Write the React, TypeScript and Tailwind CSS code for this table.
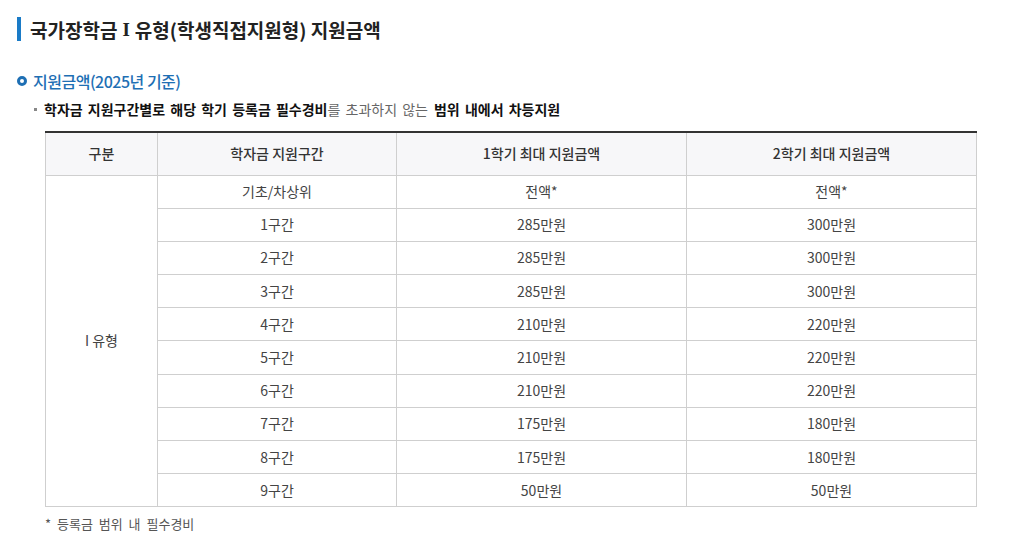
const rows: [string, string, string][] = [
  ["기초/차상위", "전액*", "전액*"],
  ["1구간", "285만원", "300만원"],
  ["2구간", "285만원", "300만원"],
  ["3구간", "285만원", "300만원"],
  ["4구간", "210만원", "220만원"],
  ["5구간", "210만원", "220만원"],
  ["6구간", "210만원", "220만원"],
  ["7구간", "175만원", "180만원"],
  ["8구간", "175만원", "180만원"],
  ["9구간", "50만원", "50만원"],
];

export default function App() {
  return (
    <div className="min-h-[560px] bg-white px-[17px] pt-[17px] font-['Noto_Sans_CJK_KR','Noto_Sans',sans-serif] text-[#333]">
      <h1 className="flex h-[24px] items-center border-l-4 border-[#1a7bc7] pl-[9px] text-[19px] font-bold leading-none text-[#222]">
        국가장학금 <span className="mx-[5px] font-['Liberation_Serif',serif]">I</span> 유형(학생직접지원형) 지원금액
      </h1>

      <h2 className="mt-[32px] flex items-center gap-[6px] text-[16px] font-medium leading-none tracking-[-0.5px] text-[#1e6fb4]">
        <span className="inline-block h-[10px] w-[10px] rounded-full border-[3px] border-[#1e6fb4]" />
        지원금액(2025년 기준)
      </h2>

      <p className="mt-[13px] flex items-center pl-[17px] text-[14px] leading-none text-[#666] [word-spacing:2px]">
        <span className="mr-[7px] inline-block h-[3px] w-[3px] bg-[#888]" />
        <b className="font-bold text-[#111]">학자금 지원구간별로 해당 학기 등록금 필수경비</b>
        <span>를 초과하지 않는</span>
        <b className="ml-[6px] font-bold text-[#111]">범위 내에서 차등지원</b>
      </p>

      <table className="ml-[28px] mt-[15px] w-[931px] table-fixed border-collapse border-t-2 border-t-[#333] text-center text-[14px] text-[#444]">
        <colgroup>
          <col className="w-[112px]" />
          <col className="w-[239px]" />
          <col className="w-[290px]" />
          <col className="w-[290px]" />
        </colgroup>
        <thead>
          <tr className="h-[43px] bg-[#f7f7f9]">
            <th className="border border-t-0 border-[#cfcfcf] font-medium text-[#333]">구분</th>
            <th className="border border-t-0 border-[#cfcfcf] font-medium text-[#333]">학자금 지원구간</th>
            <th className="border border-t-0 border-[#cfcfcf] font-medium text-[#333]">1학기 최대 지원금액</th>
            <th className="border border-t-0 border-[#cfcfcf] font-medium text-[#333]">2학기 최대 지원금액</th>
          </tr>
        </thead>
        <tbody>
          {rows.map((r, i) => (
            <tr key={r[0]} className="h-[33.2px]">
              {i === 0 && (
                <td rowSpan={rows.length} className="border border-[#cfcfcf]">
                  I 유형
                </td>
              )}
              <td className="border border-[#cfcfcf]">{r[0]}</td>
              <td className="border border-[#cfcfcf]">{r[1]}</td>
              <td className="border border-[#cfcfcf]">{r[2]}</td>
            </tr>
          ))}
        </tbody>
      </table>

      <p className="ml-[28px] mt-[7px] text-[13px] text-[#555] [word-spacing:3px]">* 등록금 범위 내 필수경비</p>
    </div>
  );
}
